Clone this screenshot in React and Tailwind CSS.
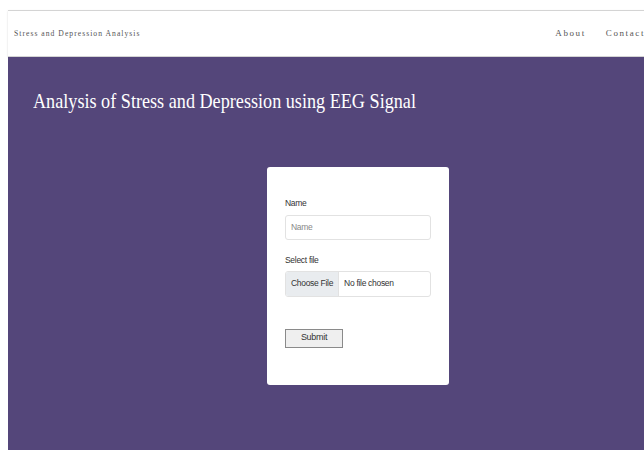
import React from 'react'

const serif = { fontFamily: '"Liberation Serif", "Times New Roman", serif' }

const Navbar = () => (
  <nav className="flex h-[47px] items-center justify-between border-y border-[#d4d4d4] pl-[6px] pr-[55px] shadow-[0_1px_2px_rgba(0,0,0,0.15)]">
    <span className="text-[9px] tracking-[1.2px] text-[#555] font-['Liberation_Serif',serif] origin-left scale-x-[0.85] inline-block whitespace-nowrap">
      Stress and Depression Analysis
    </span>
    <div className="flex gap-[20px] text-[9px] tracking-[1.6px] text-[#555] font-['Liberation_Serif',serif]">
      <a href="#">About</a>
      <a href="#">Contact</a>
    </div>
  </nav>
)

const UploadForm = () => (
  <form
    onSubmit={(e) => e.preventDefault()}
    className="w-[182px] rounded-[3px] bg-white px-[18px] pt-[30px] pb-[37px] font-['Liberation_Sans',sans-serif] text-[8.5px] tracking-[-0.3px] text-[#333]"
  >
    <label className="block leading-[12px]">Name</label>
    <input
      type="text"
      placeholder="Name"
      className="mt-[6px] block h-[25px] w-full rounded-[3px] border border-[#e2e2e2] px-[5px] text-[8.5px] tracking-[-0.3px] placeholder:text-[#888] outline-none"
    />
    <label className="mt-[14px] block leading-[12px]">Select file</label>
    <div className="mt-[5px] flex h-[26px] w-full overflow-hidden rounded-[3px] border border-[#e2e2e2]">
      <span className="flex items-center border-r border-[#e2e2e2] bg-[#e9ecef] px-[5px]">Choose File</span>
      <span className="flex items-center px-[5px]">No file chosen</span>
    </div>
    <button
      type="submit"
      className="mt-[32px] block h-[19px] w-[58px] border border-[#8a8a8a] bg-[#efefef] text-[9px] tracking-[-0.3px] text-[#333]"
    >
      Submit
    </button>
  </form>
)

const App = () => {
  return (
    <div className="h-[450px] w-[644px] overflow-hidden bg-white">
      <div className="w-[700px] pl-[8px] pt-[10px]">
        <Navbar />
        <main className="h-[400px] bg-[#54467a]">
          <div className="pl-[25px] pt-[29px]">
            <h1
              style={serif}
              className="inline-block origin-left scale-x-[0.865] whitespace-nowrap text-[21px] text-white"
            >
              Analysis of Stress and Depression using EEG Signal
            </h1>
          </div>
          <div className="mt-[49px] flex justify-center pl-[8px]">
            <UploadForm />
          </div>
        </main>
      </div>
    </div>
  )
}

export default App
